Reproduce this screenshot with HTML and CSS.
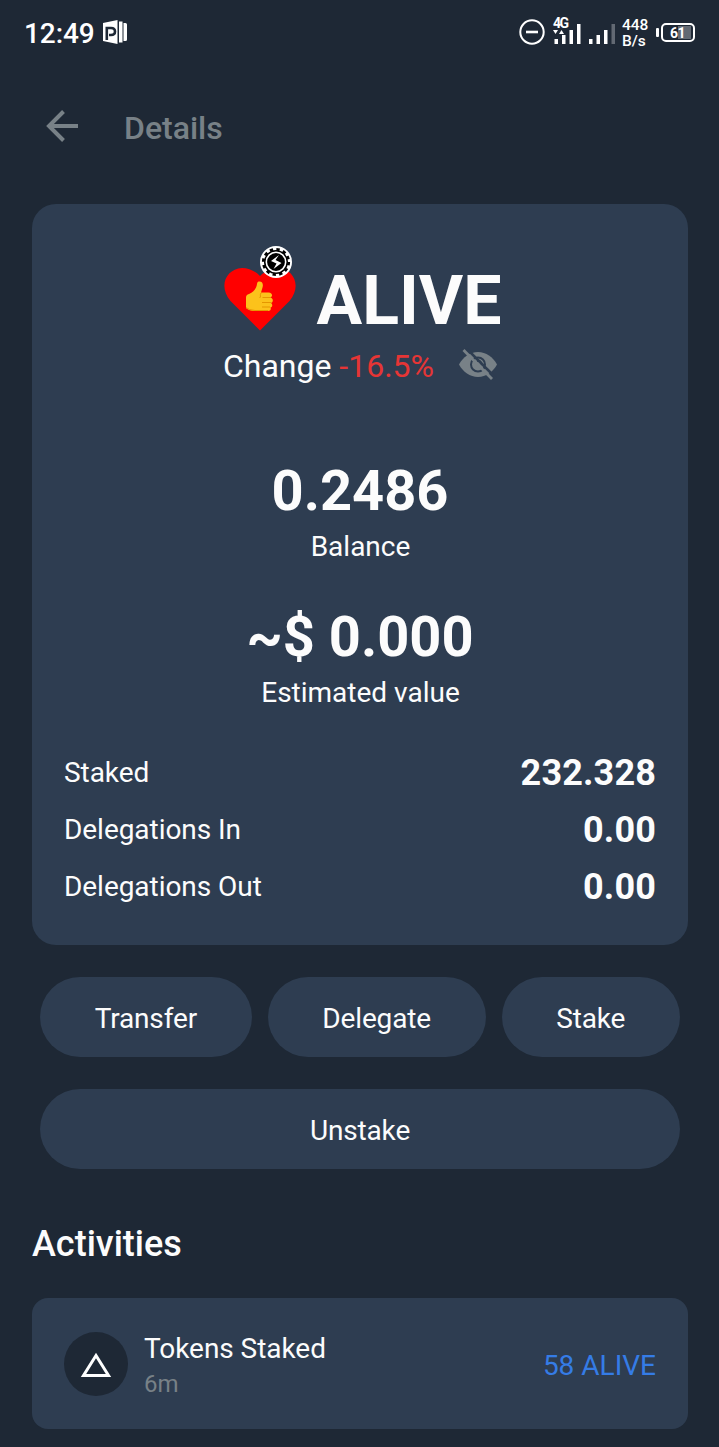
FILE: index.html
```html
<!doctype html>
<html lang="en">
  <head>
    <meta charset="UTF-8" />
    <meta name="viewport" content="width=device-width, initial-scale=1.0" />
    <title>Details - ALIVE</title>
    <link rel="stylesheet" href="styles.css">
  </head>
  <body>
    <div class="status-bar">
      <span class="clock">12:49</span>
      <svg class="app-icon" width="24" height="24" viewBox="0 0 24 24" fill="#fff">
        <path d="M0 3 14.500 0v24L0 21z" />
        <path d="M16 1.500h3.500v21H16zM20.500 3h2q1.500 0 1.500 1.500v15q0 1.500-1.500 1.500h-2z" />
        <path d="M3.800 20V8H8q4 0 4 3.500T8 15H6" fill="none" stroke="#1e2835" stroke-width="2.600" />
      </svg>
      <div class="status-right">
        <svg class="dnd" width="26" height="26" viewBox="0 0 26 26" fill="none" stroke="#fff" stroke-width="2">
          <circle cx="13" cy="13" r="11.700" />
          <path d="M7 13h12" stroke-width="2.600" />
        </svg>
        <div class="network">
          <span class="network-type">4G</span>
          <svg width="62" height="30" viewBox="0 0 62 30" fill="#fff">
            <path d="M0 13h5l-2.500 4zM6 17h5L8.500 13z" />
            <path d="M1.500 22h3.500v5H1.500zM9 18h3.500v9H9zM16.500 13H20v14h-3.500zM24 7h3.500v20H24z" />
            <path d="M36 22h3.500v5H36zM43.500 18H47v9h-3.500zM51 13h3.500v14H51z" />
            <path d="M58.500 7H62v20h-3.500z" fill="#626973" />
          </svg>
        </div>
        <div class="speed">
          <div>448</div>
          <div>B/s</div>
        </div>
        <div class="battery"><span>61</span></div>
      </div>
    </div>

    <header class="header">
      <svg width="34" height="34" viewBox="0 0 34 34" fill="none" stroke="#788187" stroke-width="4">
        <path d="M33 17H4M18.500 2.500 4 17l14.500 14.500" />
      </svg>
      <h1>Details</h1>
    </header>

    <main>
      <section class="card">
        <div class="token">
          <svg class="token-logo" width="72" height="86" viewBox="0 0 72 86">
            <path d="M36 84.500 6.500 55C-6 40 2 23 18 22c7 0 13 3 18 8 5-5 11-8 18-8 16 1 24 18 11.500 33z" fill="#f00" />
            <path d="M22 51.500c0-2 1-3 3-3.500 5-2 7.500-6 8-10 .3-2 1-2.500 2.500-2.500 3 0 4 3 3 6l-1.500 5h7.500c4 0 4.500 4 2 5 3 1 3 4.500.5 5.500 2 1.500 1.500 4-.500 4.500 1 2-.5 3.500-2.500 3.500H31c-4 0-7-1-9-3z" fill="#fcc21b" />
            <path d="M38.500 51.500h8.500M38 56.500h9.500M38 61h8M37 47c-1.500 2 .5 4-1.500 5" fill="none" stroke="#e59600" stroke-width="1" />
            <path d="M22 61.500q3 2.700 9 3h13" fill="none" stroke="#e59600" stroke-width="1" />
            <circle cx="52" cy="16" r="16" fill="#fff" />
            <circle cx="52" cy="16" r="12" fill="#000" />
            <circle cx="52" cy="16" r="12.700" fill="none" stroke="#000" stroke-width="2.800" stroke-dasharray="3.325" />
            <circle cx="52" cy="16" r="9.700" fill="#000" stroke="#fff" stroke-width="1.600" />
            <path d="m55 9-8 6 5.500 2.500-3 5.500 8-6-6-3z" fill="#fff" />
          </svg>
          <h2>ALIVE</h2>
        </div>
        <div class="change">
          <span>Change <span class="negative">-16.5%</span></span>
          <svg width="40" height="34" viewBox="0 0 40 34">
            <path d="M1 16.500C5 9 12 4 20 4s15 5 19 12.500C35 24 28 29 20 29S5 24 1 16.500z" fill="#788187" />
            <circle cx="20" cy="16.500" r="7" fill="none" stroke="#2e3d51" stroke-width="2" />
            <path d="M19 13q4-1 5 4" fill="none" stroke="#2e3d51" stroke-width="2" />
            <path d="M8 0 38 30" stroke="#2e3d51" stroke-width="2.500" />
            <path d="M5.500 2 34 31" stroke="#788187" stroke-width="2.800" />
          </svg>
        </div>

        <div class="amount">0.2486</div>
        <div class="label">Balance</div>
        <div class="amount estimated">~$ 0.000</div>
        <div class="label">Estimated value</div>

        <div class="rows">
          <div class="row"><span>Staked</span><strong>232.328</strong></div>
          <div class="row"><span>Delegations In</span><strong>0.00</strong></div>
          <div class="row"><span>Delegations Out</span><strong>0.00</strong></div>
        </div>
      </section>

      <div class="actions">
        <button class="btn">Transfer</button>
        <button class="btn">Delegate</button>
        <button class="btn">Stake</button>
        <button class="btn btn-wide">Unstake</button>
      </div>

      <h3>Activities</h3>
      <div class="activity">
        <div class="activity-icon">
          <svg width="32" height="26" viewBox="0 0 32 26" fill="none" stroke="#fff" stroke-width="3">
            <path d="M16 3.500 28.500 23.500h-25z" />
          </svg>
        </div>
        <div class="activity-text">
          <div class="activity-title">Tokens Staked</div>
          <div class="activity-time">6m</div>
        </div>
        <div class="activity-value">58 ALIVE</div>
      </div>
    </main>
  </body>
</html>
```
FILE: styles.css
```css
* {
  margin: 0;
  padding: 0;
  box-sizing: border-box;
}

body {
  font-family: Roboto, sans-serif;
  font-size: 28px;
  background: #1e2835;
  color: #fcfcfc;
  min-height: 100vh;
  overflow: hidden;
}

svg {
  display: block;
  flex-shrink: 0;
}

/* Status bar */
.status-bar {
  display: flex;
  align-items: center;
  height: 64px;
  padding: 0 24px;
  color: #fff;
}

.clock {
  font-size: 28px;
  font-weight: 500;
  line-height: 32px;
  letter-spacing: -0.1px;
  width: 71px;
  padding-top: 4px;
}

.app-icon {
  margin-left: 8px;
}

.status-right {
  display: flex;
  align-items: center;
  margin-left: auto;
}

.network {
  position: relative;
  margin-left: 8px;
}

.network-type {
  position: absolute;
  top: -1px;
  left: 0;
  font-size: 14px;
  font-weight: 700;
  line-height: 14px;
  letter-spacing: -1.5px;
}

.speed {
  width: 28px;
  margin-left: 7px;
  padding-top: 1px;
  font-size: 15.5px;
  font-weight: 500;
  line-height: 16px;
}

.speed div {
  height: 16px;
}

.battery {
  position: relative;
  width: 34px;
  height: 19px;
  margin-left: 11px;
  padding-right: 1px;
  border: 2px solid #fff;
  border-radius: 5px;
  background: linear-gradient(#626973, #626973) 15px 1px / 13px 13px no-repeat;
  font-size: 14px;
  font-weight: 700;
  line-height: 16px;
  letter-spacing: -0.5px;
  text-align: center;
}

.battery::before {
  content: "";
  position: absolute;
  left: -7px;
  top: 3px;
  width: 3px;
  height: 9px;
  border-radius: 1px;
  background: #fff;
}

/* Header */
.header {
  display: flex;
  align-items: center;
  gap: 45px;
  height: 124px;
  padding-left: 45px;
  color: #788187;
}

.header h1 {
  font-size: 32px;
  font-weight: 500;
  line-height: 36px;
  padding-top: 4px;
}

main {
  padding: 16px 31px 0 32px;
}

/* Token card */
.card {
  height: 741px;
  padding: 42px 32px 0;
  border-radius: 24px;
  background: #2e3d51;
  text-align: center;
}

.token {
  display: flex;
  justify-content: center;
  gap: 20px;
  height: 93px;
  padding-left: 6px;
}

.token h2 {
  font-size: 68px;
  font-weight: 700;
  line-height: 80px;
  padding-top: 15px;
}

.change {
  display: flex;
  justify-content: center;
  gap: 24px;
  height: 44px;
  padding-left: 1px;
  font-size: 32px;
  line-height: 54px;
}

.change svg {
  margin-top: 9px;
}

.negative {
  color: #e63535;
}

.amount {
  margin-top: 75px;
  font-size: 56px;
  font-weight: 700;
  line-height: 66px;
}

.estimated {
  margin-top: 40px;
}

.label {
  margin-top: 6px;
  padding-left: 1px;
  line-height: 34px;
}

.rows {
  margin-top: 34px;
}

.row {
  display: flex;
  justify-content: space-between;
  height: 57px;
  line-height: 57px;
  letter-spacing: -0.05px;
}

.row strong {
  font-size: 36px;
  letter-spacing: 0.15px;
  padding-top: 1px;
}

/* Buttons */
.actions {
  display: flex;
  flex-wrap: wrap;
  gap: 32px 16px;
  padding: 32px 8px 0;
}

.btn {
  flex: 1 0 auto;
  height: 80px;
  padding: 2px 50px 0;
  border: none;
  border-radius: 40px;
  background: #2e3d51;
  color: #fcfcfc;
  font: 28px Roboto, sans-serif;
  letter-spacing: -0.15px;
}

.btn-wide {
  width: 100%;
}

/* Activities */
h3 {
  margin-top: 54px;
  font-size: 36px;
  font-weight: 500;
  line-height: 42px;
}

.activity {
  display: flex;
  align-items: center;
  height: 131px;
  margin-top: 33px;
  padding: 0 32px;
  border-radius: 16px;
  background: #2e3d51;
}

.activity-icon {
  display: flex;
  align-items: center;
  justify-content: center;
  width: 64px;
  height: 64px;
  margin-right: 16px;
  padding-top: 2px;
  border-radius: 50%;
  background: #1e2835;
}

.activity-text {
  padding-top: 3px;
}

.activity-title {
  line-height: 36px;
  letter-spacing: -0.05px;
}

.activity-time {
  margin-top: 2px;
  font-size: 24px;
  line-height: 30px;
  color: #788187;
}

.activity-value {
  margin-left: auto;
  padding-top: 3px;
  color: #357ce6;
}
```
